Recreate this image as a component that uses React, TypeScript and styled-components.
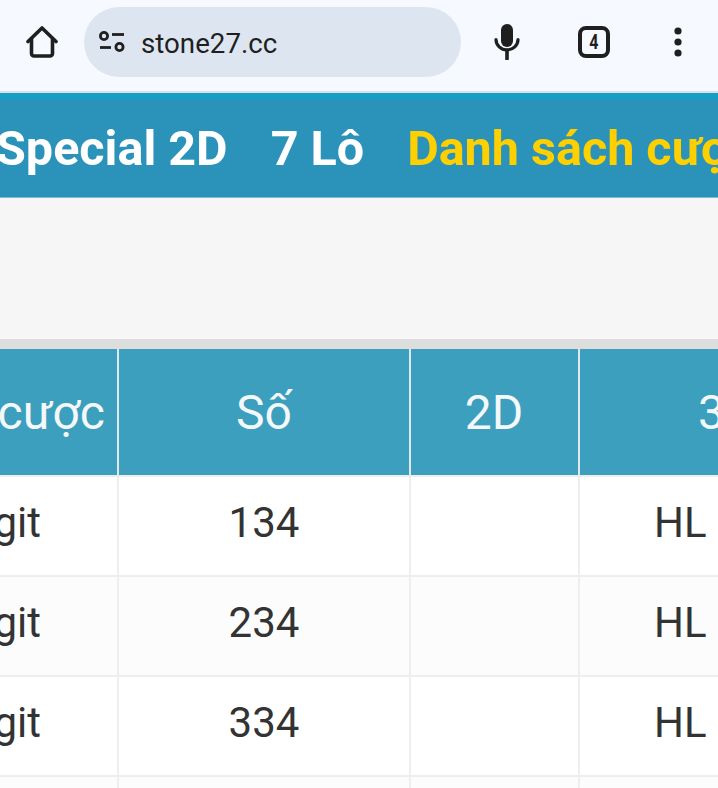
import styled, { createGlobalStyle } from "styled-components";

const GlobalStyle = createGlobalStyle`
  html, body {
    margin: 0;
    padding: 0;
    background: #ffffff;
    overflow: hidden;
  }
`;

const Page = styled.div`
  width: 718px;
  height: 788px;
  overflow: hidden;
  font-family: Roboto, "Liberation Sans", sans-serif;
`;

const Toolbar = styled.div`
  display: flex;
  align-items: center;
  height: 84px;
  padding-bottom: 7px;
  background: #f6f9ff;
  border-bottom: 2px solid #dcdfe8;
`;

const HomeButton = styled.svg`
  flex: none;
  width: 32px;
  height: 32px;
  margin-left: 26px;
  margin-right: 26px;
`;

const AddressPill = styled.div`
  flex: none;
  display: flex;
  align-items: center;
  gap: 16px;
  width: 362px;
  height: 70px;
  padding-left: 15px;
  border-radius: 35px;
  background: #dde6f0;
`;

const SiteText = styled.span`
  margin-top: 2px;
  font-size: 27.7px;
  color: #1f1f1f;
`;

const MicIcon = styled.svg`
  flex: none;
  width: 26px;
  height: 36px;
  margin-left: 33px;
  margin-right: 58px;
`;

const TabCount = styled.div`
  flex: none;
  display: flex;
  align-items: center;
  justify-content: center;
  box-sizing: border-box;
  width: 32px;
  height: 32px;
  border: 4px solid #1f1f1f;
  border-radius: 8px;
  font-size: 20px;
  font-weight: 700;
  color: #1f1f1f;
`;

const TabDigit = styled.span`
  transform: scaleX(0.8);
`;

const MenuDots = styled.svg`
  flex: none;
  width: 8px;
  height: 30px;
  margin-left: 64px;
`;

const TabBar = styled.div`
  display: flex;
  align-items: center;
  gap: 43px;
  height: 98px;
  overflow: hidden;
  background: #2b93b9;
  border-top: 6px solid #149fc8;
  border-bottom: 1px solid #7fbcd6;
`;

const Tab = styled.span<{ $active?: boolean }>`
  flex: none;
  font-size: 48.5px;
  font-weight: 700;
  white-space: nowrap;
  color: ${(p) => (p.$active ? "#ffd000" : "#ffffff")};

  &:first-child {
    margin-left: -4px;
  }
`;

const FilterArea = styled.div`
  height: 141px;
  background: #f6f6f6;
  border-bottom: 10px solid #dddddd;
`;

const TableScroller = styled.div`
  overflow: hidden;
`;

const Table = styled.table`
  width: 839px;
  margin-left: -121px;
  table-layout: fixed;
  border-collapse: separate;
  border-spacing: 0;
`;

const HeadCell = styled.th<{ $align?: string; $pad?: string }>`
  box-sizing: border-box;
  height: 128px;
  padding: ${(p) => p.$pad || "0"};
  overflow: hidden;
  white-space: nowrap;
  text-align: ${(p) => p.$align || "center"};
  font-size: 48px;
  font-weight: 400;
  color: #f4f8fa;
  background: #3c9fbe;
  border-right: 2px solid #dfe9ed;
  border-bottom: 2px solid #eeeeee;

  &:last-child {
    border-right: none;
  }
`;

const Row = styled.tr<{ $odd: boolean }>`
  background: ${(p) => (p.$odd ? "#ffffff" : "#fcfcfc")};
`;

const Cell = styled.td<{ $align?: string; $pad?: string }>`
  box-sizing: border-box;
  height: 100px;
  padding: ${(p) => p.$pad || "0 0 8px"};
  overflow: hidden;
  white-space: nowrap;
  text-align: ${(p) => p.$align || "center"};
  font-size: 42px;
  color: #333333;
  border-right: 2px solid #eeeeee;
  border-bottom: 2px solid #eeeeee;

  &:last-child {
    border-right: none;
  }
`;

const rows = ["134", "234", "334", "434"];

export default function App() {
  return (
    <Page>
      <GlobalStyle />
      <Toolbar>
        <HomeButton viewBox="0 0 32 32" fill="none" stroke="#1f1f1f" strokeWidth="3.6" strokeLinejoin="round" strokeLinecap="round">
          <path d="M2 15.5 16 2l14 13.5" />
          <path d="M5.5 13v14.5a2.5 2.5 0 0 0 2.5 2.5h16a2.5 2.5 0 0 0 2.5-2.5V13" />
        </HomeButton>
        <AddressPill>
          <svg width="26" height="24" viewBox="0 0 26 24" fill="none" stroke="#1f1f1f" strokeWidth="2.8">
            <circle cx="5" cy="6" r="3.6" />
            <path d="M13 4.5h12" />
            <path d="M1 17.5h11" />
            <circle cx="20.5" cy="17" r="3.6" />
          </svg>
          <SiteText>stone27.cc</SiteText>
        </AddressPill>
        <MicIcon viewBox="0 0 26 36" fill="none">
          <rect x="7" y="0" width="12" height="23" rx="6" fill="#1f1f1f" />
          <path d="M2 15.5a11 10.5 0 0 0 22 0" stroke="#1f1f1f" strokeWidth="3.2" strokeLinecap="round" />
          <path d="M13 26v9" stroke="#1f1f1f" strokeWidth="3.6" strokeLinecap="round" />
        </MicIcon>
        <TabCount>
          <TabDigit>4</TabDigit>
        </TabCount>
        <MenuDots viewBox="0 0 8 30" fill="#1f1f1f">
          <circle cx="4" cy="4" r="3.6" />
          <circle cx="4" cy="15" r="3.6" />
          <circle cx="4" cy="26" r="3.6" />
        </MenuDots>
      </Toolbar>
      <TabBar>
        <Tab>Special 2D</Tab>
        <Tab>7 Lô</Tab>
        <Tab $active>Danh sách cược</Tab>
      </TabBar>
      <FilterArea />
      <TableScroller>
        <Table>
          <colgroup>
            <col width="240" />
            <col width="292" />
            <col width="169" />
            <col width="138" />
          </colgroup>
          <thead>
            <tr>
              <HeadCell $align="right" $pad="0 12px 0 0">Loại cược</HeadCell>
              <HeadCell>Số</HeadCell>
              <HeadCell $pad="0 1px 0 0">2D</HeadCell>
              <HeadCell $align="left" $pad="0 0 0 118px">3D</HeadCell>
            </tr>
          </thead>
          <tbody>
            {rows.map((num, i) => (
              <Row key={num} $odd={i % 2 === 0}>
                <Cell $align="right" $pad="0 76px 8px 0">3 Digit</Cell>
                <Cell>{num}</Cell>
                <Cell />
                <Cell $align="left" $pad="0 0 8px 74px">HL</Cell>
              </Row>
            ))}
          </tbody>
        </Table>
      </TableScroller>
    </Page>
  );
}
